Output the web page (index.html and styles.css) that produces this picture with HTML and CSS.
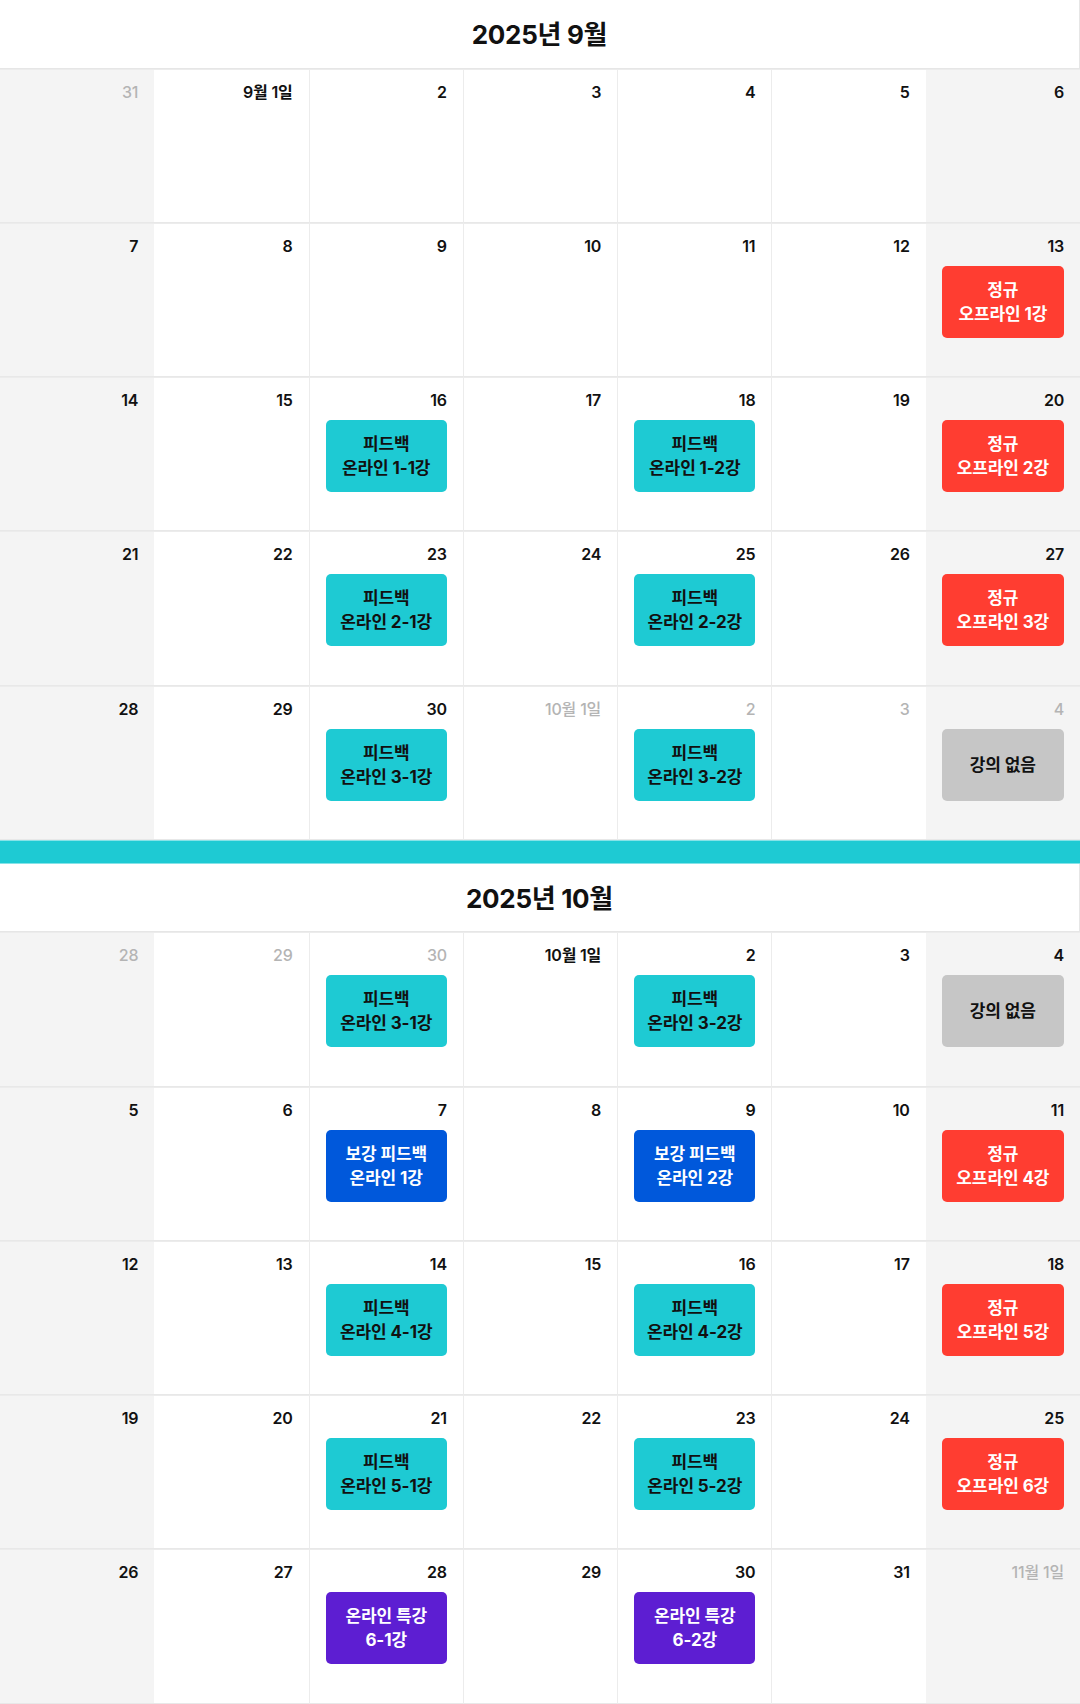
FILE: index.html
```html
<!DOCTYPE html>
<html lang="ko">
	<head>
		<meta charset="utf-8">
		<title>2025 강의 일정</title>
		<link rel="stylesheet" href="styles.css">
	</head>
	<body>
		<section class="month">
			<h2 class="month-title">2025년 9월</h2>
			<div class="grid">
				<div class="cell weekend"><div class="day muted">31</div></div>
				<div class="cell"><div class="day">9월 1일</div></div>
				<div class="cell"><div class="day">2</div></div>
				<div class="cell"><div class="day">3</div></div>
				<div class="cell"><div class="day">4</div></div>
				<div class="cell"><div class="day">5</div></div>
				<div class="cell weekend"><div class="day">6</div></div>

				<div class="cell weekend"><div class="day">7</div></div>
				<div class="cell"><div class="day">8</div></div>
				<div class="cell"><div class="day">9</div></div>
				<div class="cell"><div class="day">10</div></div>
				<div class="cell"><div class="day">11</div></div>
				<div class="cell"><div class="day">12</div></div>
				<div class="cell weekend"><div class="day">13</div><div class="event red">정규<br>오프라인 1강</div></div>

				<div class="cell weekend"><div class="day">14</div></div>
				<div class="cell"><div class="day">15</div></div>
				<div class="cell"><div class="day">16</div><div class="event teal">피드백<br>온라인 1-1강</div></div>
				<div class="cell"><div class="day">17</div></div>
				<div class="cell"><div class="day">18</div><div class="event teal">피드백<br>온라인 1-2강</div></div>
				<div class="cell"><div class="day">19</div></div>
				<div class="cell weekend"><div class="day">20</div><div class="event red">정규<br>오프라인 2강</div></div>

				<div class="cell weekend"><div class="day">21</div></div>
				<div class="cell"><div class="day">22</div></div>
				<div class="cell"><div class="day">23</div><div class="event teal">피드백<br>온라인 2-1강</div></div>
				<div class="cell"><div class="day">24</div></div>
				<div class="cell"><div class="day">25</div><div class="event teal">피드백<br>온라인 2-2강</div></div>
				<div class="cell"><div class="day">26</div></div>
				<div class="cell weekend"><div class="day">27</div><div class="event red">정규<br>오프라인 3강</div></div>

				<div class="cell weekend"><div class="day">28</div></div>
				<div class="cell"><div class="day">29</div></div>
				<div class="cell"><div class="day">30</div><div class="event teal">피드백<br>온라인 3-1강</div></div>
				<div class="cell"><div class="day muted">10월 1일</div></div>
				<div class="cell"><div class="day muted">2</div><div class="event teal">피드백<br>온라인 3-2강</div></div>
				<div class="cell"><div class="day muted">3</div></div>
				<div class="cell weekend"><div class="day muted">4</div><div class="event grey">강의 없음</div></div>
			</div>
		</section>

		<div class="divider"></div>

		<section class="month">
			<h2 class="month-title">2025년 10월</h2>
			<div class="grid">
				<div class="cell weekend"><div class="day muted">28</div></div>
				<div class="cell"><div class="day muted">29</div></div>
				<div class="cell"><div class="day muted">30</div><div class="event teal">피드백<br>온라인 3-1강</div></div>
				<div class="cell"><div class="day">10월 1일</div></div>
				<div class="cell"><div class="day">2</div><div class="event teal">피드백<br>온라인 3-2강</div></div>
				<div class="cell"><div class="day">3</div></div>
				<div class="cell weekend"><div class="day">4</div><div class="event grey">강의 없음</div></div>

				<div class="cell weekend"><div class="day">5</div></div>
				<div class="cell"><div class="day">6</div></div>
				<div class="cell"><div class="day">7</div><div class="event blue">보강 피드백<br>온라인 1강</div></div>
				<div class="cell"><div class="day">8</div></div>
				<div class="cell"><div class="day">9</div><div class="event blue">보강 피드백<br>온라인 2강</div></div>
				<div class="cell"><div class="day">10</div></div>
				<div class="cell weekend"><div class="day">11</div><div class="event red">정규<br>오프라인 4강</div></div>

				<div class="cell weekend"><div class="day">12</div></div>
				<div class="cell"><div class="day">13</div></div>
				<div class="cell"><div class="day">14</div><div class="event teal">피드백<br>온라인 4-1강</div></div>
				<div class="cell"><div class="day">15</div></div>
				<div class="cell"><div class="day">16</div><div class="event teal">피드백<br>온라인 4-2강</div></div>
				<div class="cell"><div class="day">17</div></div>
				<div class="cell weekend"><div class="day">18</div><div class="event red">정규<br>오프라인 5강</div></div>

				<div class="cell weekend"><div class="day">19</div></div>
				<div class="cell"><div class="day">20</div></div>
				<div class="cell"><div class="day">21</div><div class="event teal">피드백<br>온라인 5-1강</div></div>
				<div class="cell"><div class="day">22</div></div>
				<div class="cell"><div class="day">23</div><div class="event teal">피드백<br>온라인 5-2강</div></div>
				<div class="cell"><div class="day">24</div></div>
				<div class="cell weekend"><div class="day">25</div><div class="event red">정규<br>오프라인 6강</div></div>

				<div class="cell weekend"><div class="day">26</div></div>
				<div class="cell"><div class="day">27</div></div>
				<div class="cell"><div class="day">28</div><div class="event purple">온라인 특강<br>6-1강</div></div>
				<div class="cell"><div class="day">29</div></div>
				<div class="cell"><div class="day">30</div><div class="event purple">온라인 특강<br>6-2강</div></div>
				<div class="cell"><div class="day">31</div></div>
				<div class="cell weekend"><div class="day muted">11월 1일</div></div>
			</div>
		</section>
	</body>
</html>
```

FILE: styles.css
```css
* {
	box-sizing: border-box;
}

body {
	margin: 0;
	padding: 0;
	background: #fff;
	color: #111;
	font-family: "Inter", "Noto Sans CJK KR", sans-serif;
}

.month-title {
	margin: 0;
	height: 68.5px;
	line-height: 70px;
	text-align: center;
	font-size: 26px;
	font-weight: 700;
	letter-spacing: -0.3px;
	border-right: 1px solid #e6e6e6;
	border-bottom: 1px solid #e6e6e6;
}

.grid {
	display: grid;
	grid-template-columns: repeat(7, 1fr);
}

.cell {
	height: 154.28px;
	background: #fff;
	border-bottom: 1px solid #e8e8e8;
	border-top: 1px solid #ececec;
}

/* 화~금 칸 왼쪽 선 */
.cell:nth-child(7n+3),
.cell:nth-child(7n+4),
.cell:nth-child(7n+5),
.cell:nth-child(7n+6) {
	border-left: 1px solid #ececec;
}

.cell.weekend {
	background: #f4f4f4;
}

.day {
	padding: 11px 16px 0;
	height: 34px;
	line-height: 22px;
	text-align: right;
	font-size: 16px;
	font-weight: 600;
	letter-spacing: -0.2px;
}

.day.muted {
	color: #b4b4b4;
	font-weight: 500;
}

.event {
	margin: 8px 16px 0;
	height: 72px;
	border-radius: 5px;
	display: flex;
	align-items: center;
	justify-content: center;
	text-align: center;
	font-size: 17px;
	font-weight: 700;
	line-height: 24px;
	letter-spacing: -0.1px;
}

.event.teal {
	background: #1ecad3;
	color: #111;
}

.event.red {
	background: #ff3d31;
	color: #fff;
}

.event.blue {
	background: #0058db;
	color: #fff;
}

.event.purple {
	background: #5d1ed2;
	color: #fff;
}

.event.grey {
	background: #c6c6c6;
	color: #111;
}

.divider {
	height: 24px;
	background: #1ecad3;
	border-top: 1px solid #86e3e8;
	border-bottom: 1px solid #86e3e8;
}
```
